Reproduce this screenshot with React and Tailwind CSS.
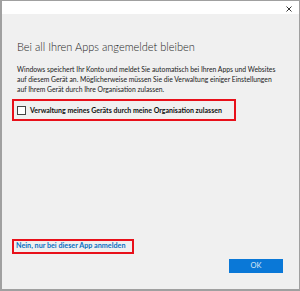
export default function App() {
  return (
    <div className="w-[300px] h-[291px] bg-white flex flex-col border-t border-l-2 border-r border-b-2 border-[#a0a0a0]" style={{ fontFamily: 'Lato, "Noto Sans", sans-serif' }}>
      <div className="h-[13px] bg-white flex justify-end items-center pr-[7px]">
        <svg width="6" height="6" viewBox="0 0 6 6" className="mt-[2px]">
          <path d="M0.5 0.5 L5.5 5.5 M5.5 0.5 L0.5 5.5" stroke="#333" strokeWidth="1" />
        </svg>
      </div>
      <div className="flex-1 bg-[#f0f0f0] flex flex-col px-[10px] pt-[25px] pb-[16px]">
        <h1 className="text-[11px] font-light leading-[15px] text-[#222] pl-[5px]">Bei all Ihren Apps angemeldet bleiben</h1>
        <p className="mt-[10px] pl-[5px] pr-[10px] text-[6.8px] leading-[10px] text-[#222]">
          Windows speichert Ihr Konto und meldet Sie automatisch bei Ihren Apps und Websites auf diesem Gerät an. Möglicherweise müssen Sie die Verwaltung einiger Einstellungen auf Ihrem Gerät durch Ihre Organisation zulassen.
        </p>
        <div className="mt-[5px] w-[224px] h-[22px] border-2 border-[#e8101a] flex items-center pl-[3px] gap-[4px]">
          <div className="w-[9px] h-[9px] border border-[#444] bg-white"></div>
          <span className="text-[7px] font-bold text-[#111] whitespace-nowrap">Verwaltung meines Geräts durch meine Organisation zulassen</span>
        </div>
        <div className="flex-1"></div>
        <div className="w-[122px] h-[15px] border-2 border-[#e8101a] flex items-center pl-[2px]">
          <span className="text-[7.2px] font-bold text-[#0a6fc2] whitespace-nowrap">Nein, nur bei dieser App anmelden</span>
        </div>
        <div className="flex justify-end mt-[5px] pr-[6px]">
          <div className="w-[54px] h-[14px] bg-[#0a78d7] flex items-center justify-center text-[7.5px] text-[#dde8f5]">OK</div>
        </div>
      </div>
    </div>
  );
}
